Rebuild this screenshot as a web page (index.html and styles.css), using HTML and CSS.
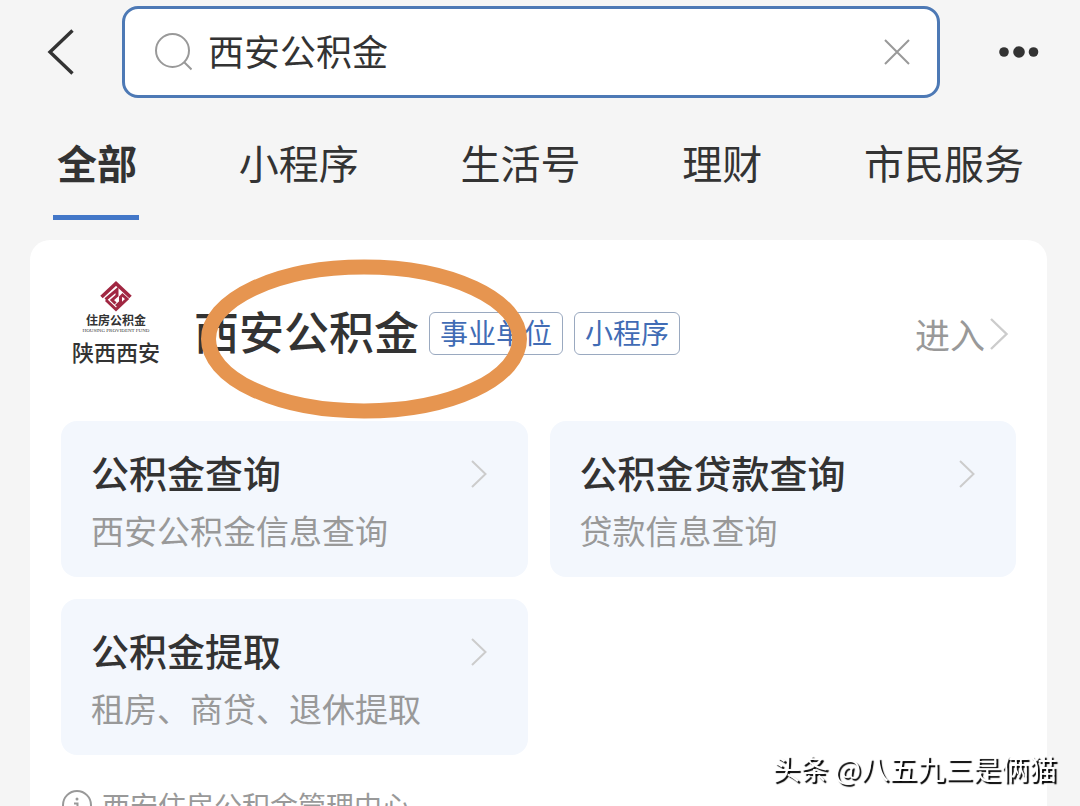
FILE: index.html
```html
<!DOCTYPE html>
<html lang="zh-CN">
<head>
  <meta charset="UTF-8">
  <meta name="viewport" content="width=device-width, initial-scale=1">
  <title>西安公积金</title>
  <link rel="stylesheet" href="styles.css">
</head>
<body>
  <header class="topbar">
    <button class="icon-btn back" aria-label="返回">
      <svg width="28" height="46" viewBox="0 0 28 46"><path d="M26.500 1.500L4 23L26.500 44.500" fill="none" stroke="#333" stroke-width="3.400"/></svg>
    </button>
    <form class="search">
      <svg class="search-icon" width="38" height="38" viewBox="0 0 38 38"><g fill="none" stroke="#999" stroke-width="2"><circle cx="18.500" cy="17.500" r="16.500"/><path d="M30 29L37.500 36.500"/></g></svg>
      <input type="text" value="西安公积金" aria-label="搜索">
      <button type="reset" class="icon-btn" aria-label="清空">
        <svg width="26" height="26" viewBox="0 0 26 26"><path d="M1 1L25 25M25 1L1 25" fill="none" stroke="#999" stroke-width="2"/></svg>
      </button>
    </form>
    <button class="icon-btn more" aria-label="更多">
      <svg width="40" height="12" viewBox="0 0 40 12"><g fill="#333"><circle cx="5" cy="6" r="4.800"/><circle cx="20" cy="6" r="5.800"/><circle cx="34.500" cy="6" r="4.800"/></g></svg>
    </button>
  </header>

  <nav class="tabs">
    <a href="#" class="active">全部</a>
    <a href="#">小程序</a>
    <a href="#">生活号</a>
    <a href="#">理财</a>
    <a href="#">市民服务</a>
  </nav>

  <main class="card">
    <div class="card-head">
      <div class="logo">
        <svg width="32" height="31" viewBox="0 0 32 31">
          <g fill="none" stroke="#a12742">
            <path d="M1.500 16L16 2.500L30.500 16" stroke-width="3.600"/>
            <path d="M5.500 18.500L17 8.800V14.500L12 19L15.500 22.500" stroke-width="3"/>
            <path d="M6 19L16 28.500L27 18L22.500 14L20.500 16V21L16 25" stroke-width="3"/>
          </g>
        </svg>
        <span class="logo-name">住房公积金</span>
        <span class="logo-en">HOUSING PROVIDENT FUND</span>
        <span class="logo-city">陕西西安</span>
      </div>
      <h1>西安公积金</h1>
      <span class="tag">事业单位</span>
      <span class="tag">小程序</span>
      <a href="#" class="enter">进入
        <svg width="20" height="32" viewBox="0 0 20 32"><path d="M2 1L17.500 16L2 31" fill="none" stroke="#ccc" stroke-width="2.400"/></svg>
      </a>
      <svg class="circle-mark" width="328" height="162" viewBox="0 0 328 162"><ellipse cx="164" cy="81" rx="155.500" ry="72" fill="none" stroke="#e69550" stroke-width="15"/></svg>
    </div>

    <div class="services">
      <a href="#" class="service">
        <h2>公积金查询</h2>
        <p>西安公积金信息查询</p>
        <svg width="16" height="28" viewBox="0 0 16 28"><path d="M1 1L14.500 14L1 27" fill="none" stroke="#ccc" stroke-width="2"/></svg>
      </a>
      <a href="#" class="service">
        <h2>公积金贷款查询</h2>
        <p>贷款信息查询</p>
        <svg width="16" height="28" viewBox="0 0 16 28"><path d="M1 1L14.500 14L1 27" fill="none" stroke="#ccc" stroke-width="2"/></svg>
      </a>
      <a href="#" class="service">
        <h2>公积金提取</h2>
        <p>租房、商贷、退休提取</p>
        <svg width="16" height="28" viewBox="0 0 16 28"><path d="M1 1L14.500 14L1 27" fill="none" stroke="#ccc" stroke-width="2"/></svg>
      </a>
    </div>

    <div class="source">
      <svg width="32" height="32" viewBox="0 0 32 32"><circle cx="16" cy="16" r="14" fill="none" stroke="#999" stroke-width="2"/><circle cx="16" cy="10" r="1.500" fill="#999"/><path d="M13 14.500H16.500V23M12.500 23H20" fill="none" stroke="#999" stroke-width="2"/></svg>
      <span>西安住房公积金管理中心</span>
    </div>
  </main>

  <div class="watermark">头条 @八五九三是俩猫</div>
</body>
</html>
```
FILE: styles.css
```css
* {
  box-sizing: border-box;
}

body {
  margin: 0;
  height: 100vh;
  overflow: hidden;
  background-color: #f5f5f5;
  color: #333;
  font-family: "Noto Sans CJK SC", "Noto Sans", sans-serif;
}

a {
  color: inherit;
  text-decoration: none;
}

h1, h2, p {
  margin: 0;
}

svg {
  display: block;
  flex: none;
}

.icon-btn {
  padding: 0;
  border: none;
  background: none;
  cursor: pointer;
}

/* top bar */
.topbar {
  display: flex;
  align-items: center;
  padding: 6px 41px 0 46px;
}

.search {
  flex: 1;
  display: flex;
  align-items: center;
  height: 92px;
  margin: 0 59px 0 48px;
  padding: 0 27px 0 29px;
  background-color: #fff;
  border: 3px solid #4d79b5;
  border-radius: 16px;
}

.search input {
  flex: 1;
  min-width: 0;
  margin: 0 16px;
  padding: 0 0 4px;
  border: none;
  outline: none;
  background: none;
  color: #333;
  font-family: inherit;
  font-size: 36px;
  line-height: 52px;
}

/* tabs */
.tabs {
  display: flex;
  justify-content: space-between;
  padding: 32px 56px 0 57px;
  font-size: 40px;
  line-height: 64px;
}

.tabs a {
  position: relative;
  height: 90px;
}

.tabs .active {
  font-weight: bold;
}

.tabs .active::after {
  content: "";
  position: absolute;
  left: -4px;
  right: -2px;
  bottom: 0;
  height: 5px;
  background-color: #4377c8;
}

/* result card */
.card {
  margin: 20px 33px 0 30px;
  padding: 0 31px;
  background-color: #fff;
  border-radius: 20px;
}

.card-head {
  position: relative;
  display: flex;
  align-items: center;
  height: 181px;
  padding-top: 6px;
}

.logo {
  display: flex;
  flex-direction: column;
  align-items: center;
  width: 110px;
  margin-right: 23px;
  padding-bottom: 22px;
  white-space: nowrap;
}

.logo-name {
  font-size: 12px;
  font-weight: bold;
  line-height: 16px;
}

.logo-en {
  font-family: "Liberation Serif", serif;
  font-size: 5px;
  line-height: 6px;
}

.logo-city {
  margin-top: 4px;
  font-size: 22px;
  font-weight: 500;
  line-height: 26px;
}

h1 {
  margin-right: 10px;
  padding-bottom: 6px;
  font-size: 45px;
  font-weight: 500;
  line-height: 64px;
}

.tag {
  margin-right: 11px;
  padding: 0 10px 2px;
  border: 1px solid #9aa9c0;
  border-radius: 6px;
  color: #416cb5;
  font-size: 28px;
  line-height: 39px;
}

.enter {
  display: flex;
  align-items: center;
  gap: 4px;
  margin: 0 7px 0 auto;
  color: #999;
  font-size: 35px;
  line-height: 52px;
}

.circle-mark {
  position: absolute;
  left: 139px;
  top: 18px;
}

.services {
  display: grid;
  grid-template-columns: 1fr 1fr;
  gap: 22px;
}

.service {
  display: grid;
  grid-template-columns: 1fr auto;
  align-items: center;
  padding: 26px 41px 20px 30px;
  background-color: #f3f7fd;
  border-radius: 16px;
}

.service h2 {
  padding-bottom: 4px;
  font-size: 38px;
  font-weight: 500;
  line-height: 50px;
}

.service p {
  grid-row: 2;
  grid-column: 1 / 3;
  margin-top: 4px;
  padding-bottom: 2px;
  color: #999;
  font-size: 33px;
  line-height: 50px;
}

.source {
  display: flex;
  align-items: center;
  gap: 9px;
  padding: 30px 0;
  color: #999;
  font-size: 28px;
  line-height: 40px;
}

.watermark {
  position: fixed;
  right: 23px;
  bottom: 18px;
  color: #fff;
  font-size: 28px;
  line-height: 40px;
  text-shadow: 2px 2px 1px #000;
}
```
